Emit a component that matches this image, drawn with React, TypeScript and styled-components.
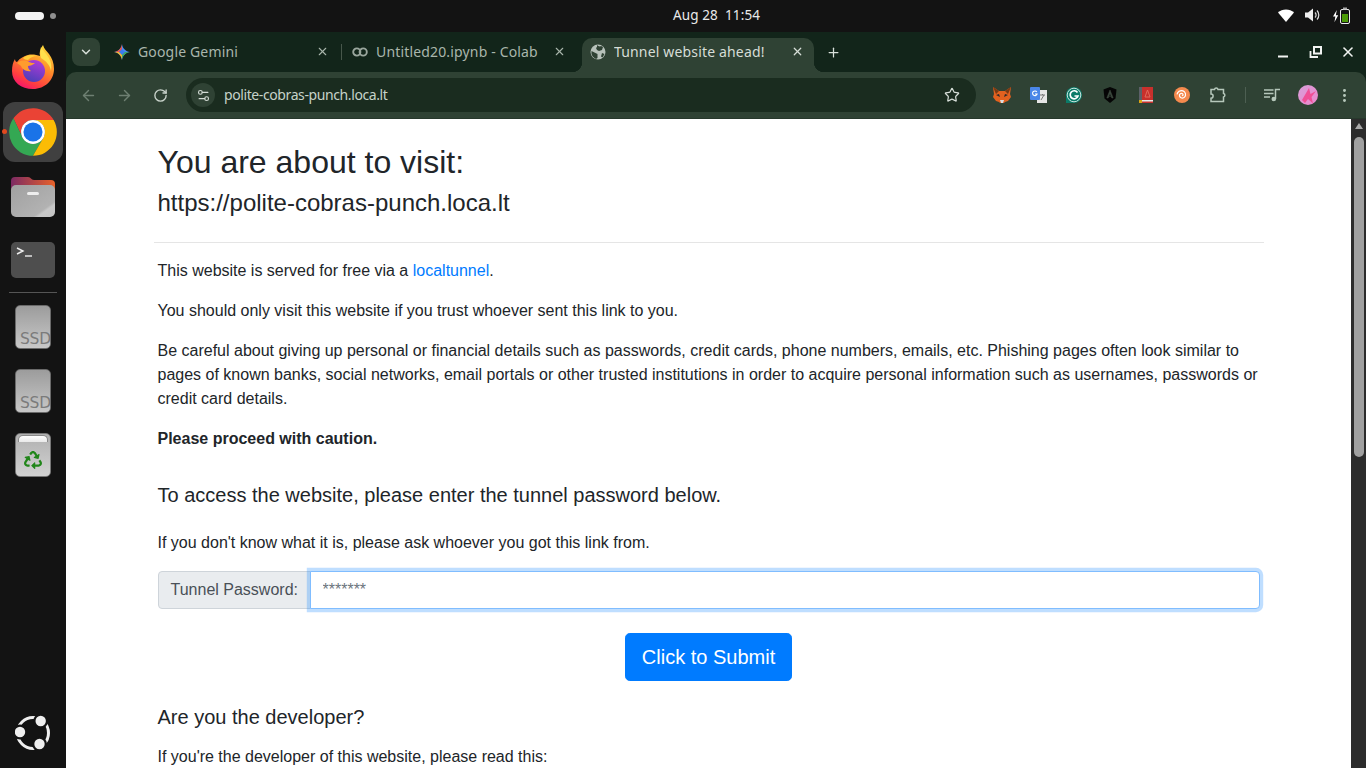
import React from "react";
import styled, { createGlobalStyle } from "styled-components";
import { ArrowLeft, ArrowRight, RotateCw, Settings2, Star, X, Plus, ChevronDown, EllipsisVertical } from "lucide-react";
import { FaRecycle } from "react-icons/fa";

const Global = createGlobalStyle`
  html, body { margin: 0; padding: 0; height: 100%; overflow: hidden; background: #131313; }
  * { box-sizing: border-box; }
`;
const Shell = styled.div`
  width: 1366px; height: 768px; overflow: hidden; display: flex; flex-direction: column;
  background: #131313; font-family: "Noto Sans", sans-serif;
`;
const TopBar = styled.header`
  height: 32px; flex: none; display: grid; grid-template-columns: 200px 1fr 133px; align-items: center;
  color: #f2f2f2; background: #131313;
`;
const Workspaces = styled.div`display: flex; align-items: center; gap: 6px; padding-left: 15px;`;
const Pill = styled.span`width: 29px; height: 8px; border-radius: 4px; background: #f4f4f4;`;
const Dot = styled.span`width: 6px; height: 6px; border-radius: 50%; background: #8f8f8f;`;
const Clock = styled.div`text-align: center; font-size: 13.5px; white-space: pre; letter-spacing: .1px; color: #e9e9e9; padding-bottom: 2px;`;
const Status = styled.div`display: flex; justify-content: flex-end; align-items: center; gap: 11px; padding: 0 16px 2px 0;`;
const Main = styled.div`flex: 1; display: flex; min-height: 0;`;
const Dock = styled.nav`width: 66px; flex: none; display: flex; flex-direction: column; align-items: center; background: #131313; position: relative;`;
const DockSlot = styled.div<{ $top: number; $h: number; $w?: number }>`
  margin-top: ${p => p.$top}px; height: ${p => p.$h}px; width: ${p => p.$w ?? 44}px; flex: none; display: flex; align-items: center; justify-content: center; position: relative;
`;
const ActiveTile = styled(DockSlot)`background: #404040; border-radius: 12px;`;
const RunDot = styled.span`position: absolute; left: -1px; top: 27px; width: 5px; height: 5px; border-radius: 50%; background: #e0491f;`;
const DockRule = styled.hr`width: 48px; height: 1px; border: 0; background: #555; margin: 14px 0 0;`;
const DriveTile = styled.div`
  width: 36px; height: 44px; border-radius: 5px; border: 1px solid #6a6a6a; background: linear-gradient(#9c9c9c, #c8c8c8);
  overflow: hidden; display: flex; align-items: flex-end; justify-content: flex-end;
`;
const DriveLabel = styled.span`font: 15.5px/20px "DejaVu Sans", sans-serif; color: #7b7b7b; margin: 0 -1px -1px 0; letter-spacing: -.2px;`;
const TrashTile = styled.div`
  width: 36px; height: 44px; border-radius: 5px; border: 1px solid #777; background: linear-gradient(#b0b0b0, #d2d2d2);
  display: flex; flex-direction: column; align-items: center; color: #21861a; gap: 9px; overflow: hidden;
`;
const TrashLid = styled.span`width: 30px; height: 7px; background: linear-gradient(#fff, #e8e8e8); border: 1px solid #8a8a8a; border-bottom: 0; border-radius: 5px 5px 0 0; margin-top: 1px;`;
const DockBottom = styled.div`margin-top: auto; margin-bottom: 17px; height: 36px; width: 36px; display: flex;`;

const Browser = styled.div`flex: 1; min-width: 0; display: flex; flex-direction: column; background: #12251a;`;
const TabStrip = styled.div`height: 40px; flex: none; display: flex; align-items: flex-end; padding-left: 6px; position: relative;`;
const TabMenu = styled.button`
  width: 28px; height: 28px; margin: 0 6px 6px 0; border: 0; border-radius: 8px; background: #2f4234; color: #d8e0da; display: flex; align-items: center; justify-content: center; padding: 0;
`;
const Tab = styled.div<{ $w: number; $pl: number; $pr: number; $active?: boolean }>`
  width: ${p => p.$w}px; height: 34px; flex: none; display: flex; align-items: center; padding: 0 ${p => p.$pr}px 7px ${p => p.$pl}px; gap: 8px; position: relative;
  font-size: 14px; color: ${p => (p.$active ? "#d6ddd7" : "#a9b6ac")};
  background: ${p => (p.$active ? "#2f4234" : "transparent")};
  border-radius: ${p => (p.$active ? "10px 10px 0 0" : "0")};
  ${p => p.$active && `
    &::before, &::after { content: ""; position: absolute; bottom: 0; width: 10px; height: 10px; }
    &::before { left: -10px; background: radial-gradient(circle at 0 0, transparent 10px, #2f4234 10.5px); }
    &::after { right: -10px; background: radial-gradient(circle at 100% 0, transparent 10px, #2f4234 10.5px); }
  `}
`;
const TabTitle = styled.span`flex: 1; white-space: nowrap; overflow: hidden; letter-spacing: .16px;`;
const TabDivider = styled.span`width: 1px; height: 16px; background: #47574b; margin-bottom: 12px; flex: none;`;
const NewTab = styled.button`margin: 0 0 6px 10px; width: 18px; height: 28px; background: none; border: 0; padding: 0; color: #d8e0da; display: flex; align-items: center; justify-content: center;`;
const WindowControls = styled.div`margin-left: auto; margin-bottom: 6px; height: 28px; display: flex; align-items: center; gap: 16px; padding-right: 10px; color: #f1f3f1;`;
const Toolbar = styled.div`
  height: 47px; flex: none; display: flex; align-items: center; background: #2f4234; border-radius: 10px 10px 0 0; border-bottom: 1px solid #27382c; padding: 0 0 0 13px;
`;
const NavIcon = styled.span<{ $dim?: boolean }>`width: 18px; flex: none; margin-right: 18px; display: flex; justify-content: center; color: ${p => (p.$dim ? "#6e7f72" : "#c8d2ca")};`;
const Omnibox = styled.div`
  width: 790px; flex: none; height: 34px; margin-left: -1px; background: #1a2c1f; border-radius: 17px; display: flex; align-items: center; padding: 0 16px 0 5px; color: #c8d3ca; font-size: 14px;
`;
const TuneChip = styled.span`width: 24px; height: 24px; border-radius: 50%; background: #2f4234; display: flex; align-items: center; justify-content: center; color: #d4dcd6; margin-right: 9px;`;
const Url = styled.span`flex: 1; color: #c6d3c9; letter-spacing: -.4px; padding-bottom: 1px;`;
const ExtRow = styled.div`display: flex; flex: none; align-items: center; margin-left: 8px;`;
const ExtSlot = styled.span`width: 36px; height: 28px; display: flex; align-items: center; justify-content: center; color: #b6c4ba;`;
const ExtSep = styled.span`width: 1px; height: 16px; background: #4d5f52; margin: 0 8px 0 9px;`;

const PageRow = styled.div`flex: 1; display: flex; min-height: 0;`;
const Page = styled.main`
  flex: 1; background: #fff; overflow: hidden; color: #212529; font: 16px/24px "Liberation Sans", Arial, sans-serif;
`;
const Container = styled.div`width: 1140px; margin: 0 auto; padding: 24px 15px 0;`;
const Head = styled.div`padding: 0 4px;`;
const H1 = styled.h1`font-size: 32px; font-weight: 400; line-height: 38.4px; margin: 0 0 8px;`;
const H2 = styled.h2`font-size: 24px; font-weight: 400; line-height: 28.8px; margin: 0 0 8px;`;
const Rule = styled.hr`border: 0; border-top: 1px solid rgba(0,0,0,.1); margin: 24px 0 16px;`;
const Body = styled.section`padding: 0 4px;`;
const P = styled.p`margin: 0 0 16px;`;
const Link = styled.a`color: #007bff; text-decoration: none;`;
const Sub = styled.h4<{ $top: number; $bottom: number }>`font-size: 20px; font-weight: 400; line-height: 24px; margin: ${p => p.$top}px 0 ${p => p.$bottom}px;`;
const InputGroup = styled.div`display: flex; height: 38px; margin-top: 16px;`;
const Prepend = styled.label`
  flex: none; width: 153px; padding: 6px 12px; background: #e9ecef; border: 1px solid #ced4da; border-radius: 4px 0 0 4px; color: #495057; margin-right: -1px; white-space: nowrap;
`;
const Password = styled.input`
  flex: 1; min-width: 0; padding: 6px 12px; border: 1px solid #80bdff; border-radius: 0 4px 4px 0; box-shadow: 0 0 0 3.2px rgba(0,123,255,.25); outline: 0; font: 16px/24px "Liberation Sans", Arial, sans-serif; color: #495057; position: relative;
  &::placeholder { color: #6c757d; opacity: 1; }
`;
const Center = styled.div`display: flex; justify-content: center; margin-top: 24px;`;
const Submit = styled.button`
  height: 48px; padding: 8px 16px; background: #007bff; color: #fff; border: 1px solid #007bff; border-radius: 4.8px; font: 20px/30px "Liberation Sans", Arial, sans-serif;
`;
const ScrollTrack = styled.div`width: 15px; flex: none; background: #2c2c2c; display: flex; flex-direction: column; align-items: center; padding-top: 3px;`;
const ScrollUp = styled.span`width: 0; height: 0; border-left: 4.5px solid transparent; border-right: 4.5px solid transparent; border-bottom: 6px solid #a8a8a8; margin: 1px 0 8px;`;
const ScrollThumb = styled.span`width: 10px; height: 320px; border-radius: 5px; background: #a0a0a0;`;

const FirefoxIcon = () => (
  <svg width="44" height="46" viewBox="0 0 44 46">
    <defs>
      <linearGradient id="ffo" x1=".8" y1="0" x2=".3" y2="1"><stop offset="0" stopColor="#ffdf3c"/><stop offset=".45" stopColor="#ff8a2a"/><stop offset=".8" stopColor="#ff3f3f"/><stop offset="1" stopColor="#f5156c"/></linearGradient>
      <linearGradient id="ffp" x1=".7" y1="0" x2=".3" y2="1"><stop offset="0" stopColor="#b13ad8"/><stop offset="1" stopColor="#4a3fb8"/></linearGradient>
    </defs>
    <path d="M1 27c0-5 1-9 3-12 0 2 1 3 2 3 3-4 7-6 11-7 4-1 9 0 12 1-1-3 0-7 3-11 1 4 4 6 6 9 3 4 5 9 5 15 0 11-9 20-21 20S1 38 1 27z" fill="url(#ffo)"/>
    <path d="M30 3c2 4 6 7 8 11 2 4 3 8 2 13-1-6-5-10-10-13-1-3-1-7 0-11z" fill="#ffe14d"/>
    <circle cx="23" cy="27" r="11" fill="url(#ffp)"/>
    <path d="M6 19c4-3 8-3 12-1 2 1 4 1 6 1-2 2-5 3-7 3 0 2 1 4 3 5-5 1-9-2-10-5-1-1-3-2-4-3z" fill="#ff9c2e"/>
    <path d="M12 14c3-3 9-4 14-2-4 0-7 2-9 4-2 0-4-1-5-2z" fill="#ffcf3a"/>
  </svg>
);
const ChromeIcon = () => (
  <svg width="52" height="52" viewBox="0 0 48 48">
    <path fill="#EA4335" d="M43.05 13A22 22 0 0 0 5.95 11.4L14.47 29.5A11 11 0 0 1 24 13Z"/>
    <path fill="#34A853" d="M5.95 11.4A22 22 0 0 0 24 46L33.5 29.5A11 11 0 0 1 14.47 29.5Z"/>
    <path fill="#FBBC05" d="M43.05 13A22 22 0 0 1 24 46L33.5 29.5A11 11 0 0 0 24 13Z"/>
    <circle cx="24" cy="24" r="11" fill="#fff"/><circle cx="24" cy="24" r="8.8" fill="#1a73e8"/>
  </svg>
);
const FilesIcon = () => (
  <svg width="44" height="41" viewBox="0 0 44 41">
    <defs>
      <linearGradient id="fl" x1="0" x2="1"><stop offset="0" stopColor="#7c2a63"/><stop offset="1" stopColor="#e8622a"/></linearGradient>
      <linearGradient id="fb" x1="0" y1="0" x2="1" y2="1"><stop offset="0" stopColor="#a0a0a0"/><stop offset=".75" stopColor="#b2b2b2"/><stop offset=".8" stopColor="#c8c8c8"/><stop offset="1" stopColor="#c4c4c4"/></linearGradient>
    </defs>
    <path d="M0 5a4 4 0 0 1 4-4h13c3 0 3 3 6 3h17a4 4 0 0 1 4 4v10H0z" fill="url(#fl)"/>
    <rect y="9" width="44" height="32" rx="5" fill="url(#fb)"/>
    <rect x="16" y="16" width="12" height="3" rx="1.5" fill="#eee"/>
  </svg>
);
const TerminalIcon = () => (
  <svg width="44" height="36" viewBox="0 0 44 36">
    <rect width="44" height="36" rx="5" fill="#4e4e4e"/>
    <path d="M6 6l6 3-6 3" stroke="#eee" strokeWidth="1.4" fill="none"/><path d="M14 14h7" stroke="#eee" strokeWidth="1.4"/>
  </svg>
);
const UbuntuIcon = () => (
  <svg width="36" height="36" viewBox="0 0 36 36">
    <circle cx="18" cy="18" r="15.5" fill="none" stroke="#efefef" strokeWidth="3"/>
    <circle cx="25.7" cy="6" r="7.5" fill="#131313"/><circle cx="24.5" cy="29" r="7.5" fill="#131313"/><circle cx="5" cy="17" r="7.5" fill="#131313"/>
    <circle cx="25.7" cy="6" r="5.2" fill="#efefef"/><circle cx="24.5" cy="29" r="5.2" fill="#efefef"/><circle cx="5" cy="17" r="5.2" fill="#efefef"/>
  </svg>
);
const Wifi = () => (<svg width="16" height="13" viewBox="0 0 16 13"><path d="M0 3.6C2 1.5 5 .4 8 .4s6 1.1 8 3.2L8 13z" fill="#fff"/></svg>);
const Volume = () => (
  <svg width="17" height="14" viewBox="0 0 17 14"><path d="M0 4.5h3L8 .5v13l-5-4H0z" fill="#eee"/><path d="M10 4.5a3.4 3.4 0 0 1 0 5M12 2.5a6.5 6.5 0 0 1 0 9" stroke="#ddd" strokeWidth="1.2" fill="none"/></svg>
);
const Battery = () => (
  <svg width="17" height="17" viewBox="0 0 17 17">
    <path d="M4 2L0 9h2.5L1.5 15 5.5 7.5H3z" fill="#fff" transform="translate(0 1) scale(.95)"/>
    <rect x="7.5" y="2.5" width="9" height="14" rx="1.5" fill="none" stroke="#eee"/><rect x="10" y=".5" width="4" height="2" fill="#aaa"/>
    <rect x="9" y="7" width="6" height="8" fill="#4b9a06"/>
  </svg>
);
const Gemini = () => (
  <svg width="16" height="16" viewBox="0 0 16 16">
    <path d="M8 0c.4 4 3.6 7.6 8 8-4 .4-7.6 3.6-8 8-.4-4-3.6-7.6-8-8 4-.4 7.6-3.6 8-8z" fill="#4c8df6"/>
    <path d="M0 8c4-.4 7.6-3.6 8-8v8z" fill="#e8554a"/><path d="M0 8c4 .4 7.6 3.6 8 8V8z" fill="#f3b52e"/><path d="M8 16c.4-4 3.6-7.6 8-8H8z" fill="#3fa85c"/>
    <path d="M5 8l3-3 3 3-3 3z" fill="#3a7bf0"/>
  </svg>
);
const Colab = () => (
  <svg width="16" height="16" viewBox="0 0 16 16"><circle cx="4.8" cy="8" r="3.6" fill="none" stroke="#9aa69d" strokeWidth="1.9"/><circle cx="11.2" cy="8" r="3.6" fill="none" stroke="#9aa69d" strokeWidth="1.9"/></svg>
);
const Globe = () => (
  <svg width="16" height="16" viewBox="0 0 16 16"><circle cx="8" cy="8" r="7.5" fill="#b7c1ba"/><path d="M7 1c1 1 3 2 4 1l2 1-1 3-3 1-2-1-1-2 1-1zM1.5 7l4 2 2 1v4L6 15c-2-1-4-3-4.5-5zM12 9l2.5 1-2 3.5-1.5-1z" fill="#2f4234"/></svg>
);
const RestoreIcon = () => (
  <svg width="16" height="16" viewBox="0 0 16 16"><path d="M6 3h7v6.5H6z" fill="none" stroke="#f1f3f1" strokeWidth="2"/><path d="M2.500 7v6H10" stroke="#f1f3f1" strokeWidth="1.800" fill="none"/></svg>
);
const MinIcon = () => (<svg width="16" height="16" viewBox="0 0 16 16"><rect x="2" y="11.500" width="10" height="2" fill="#f1f3f1"/></svg>);
const Fox = () => (
  <svg width="18" height="16" viewBox="0 0 18 16">
    <path d="M0 0l6 4h6l6-4-1 7 1 3-3 4-3 1-1 1H7l-1-1-3-1-3-4 1-3z" fill="#e2611f"/>
    <path d="M0 0l6 4-3 3zM18 0l-6 4 3 3z" fill="#7a3a14"/><path d="M3 8l3-1 1 3zM15 8l-3-1-1 3z" fill="#2b2b2b"/><path d="M7 13h4l-1 3H8z" fill="#ddd"/>
  </svg>
);
const Translate = () => (
  <svg width="17" height="16" viewBox="0 0 17 16"><rect x="7" y="3" width="10" height="13" fill="#e6e6e6"/><path d="M10 8h5M12.500 7v1M11 13l3-5" stroke="#777" strokeWidth="1"/><rect width="10" height="13" rx="1" fill="#4a86e8"/><path d="M6.800 5a2.300 2.300 0 1 0 .3 2H5" fill="none" stroke="#fff" strokeWidth="1.100"/></svg>
);
const Grammarly = () => (
  <svg width="16" height="16" viewBox="0 0 16 16"><path d="M8 0a8 8 0 0 1 0 16H0V8a8 8 0 0 1 8-8z" fill="#0b7a68"/><circle cx="8" cy="8" r="6.800" fill="none" stroke="#dff0ec" strokeWidth=".9"/><path d="M11.500 5.500A4 4 0 1 0 12 9H8.500" fill="none" stroke="#fff" strokeWidth="1.700"/></svg>
);
const Angular = () => (
  <svg width="14" height="16" viewBox="0 0 14 16"><path d="M7 0L13.500 2.500 12.500 11.500 7 16 1.500 11.500.5 2.500z" fill="#050505"/><path d="M7 3L3.800 11h1.400L7 6.500 8.800 11h1.400zM5.800 9.500h2.400" fill="#3c4a3f" stroke="#3c4a3f" strokeWidth=".5"/></svg>
);
const Book = () => (
  <svg width="14" height="16" viewBox="0 0 14 16"><rect width="14" height="16" fill="#c8302c"/><rect width="3" height="16" fill="#5c6068"/><rect x="3" y="13" width="11" height="1.500" fill="#e9e9e9"/><path d="M8.500 3L6 10h5z" fill="none" stroke="#e16a5a"/><rect y="13" width="3" height="3" fill="#d9a514"/></svg>
);
const Swirl = () => (
  <svg width="16" height="16" viewBox="0 0 16 16"><circle cx="8" cy="8" r="8" fill="#f58a4e"/><path d="M8 8.500c1 .5 1.500-1 .5-1.800-1.500-1-3.500.3-3 2.300.5 2.200 3.500 2.800 5 1.200 2-2 1-5.500-1.500-6.300-2.800-.9-5.500.8-6 3.500" fill="none" stroke="#fff" strokeWidth="1.200"/></svg>
);
const Puzzle = () => (
  <svg width="18" height="18" viewBox="0 0 18 18"><path d="M2 3.500h3.500a1.800 1.800 0 0 1 3.500 0h5.500v4a1.800 1.800 0 0 1 0 3.500v4.500H2v-3.300a2 2 0 0 0 0-4.200z" fill="none" stroke="#b6c8bb" strokeWidth="1.500"/></svg>
);
const MediaIcon = () => (
  <svg width="16" height="14" viewBox="0 0 16 14"><path d="M0 2h9.500M0 5.500h9.500M0 9h6" stroke="#b6c8bb" strokeWidth="1.500"/><path d="M11.500 11V1.500H16" stroke="#b6c8bb" strokeWidth="1.500" fill="none"/><circle cx="9.800" cy="11" r="2.300" fill="#b6c8bb"/></svg>
);
const Avatar = () => (
  <svg width="20" height="20" viewBox="0 0 20 20">
    <defs><linearGradient id="av" x1="0" y1="0" x2="1" y2="1"><stop offset="0" stopColor="#d79fd8"/><stop offset="1" stopColor="#ee85cc"/></linearGradient></defs>
    <circle cx="10" cy="10" r="10" fill="url(#av)"/><path d="M4 15L11 3l1.500 6L18 6l-4.500 6 1.500 6.500-5-4.500-3 4z" fill="#f04f96"/>
  </svg>
);

export default function App() {
  return (
    <Shell>
      <Global />
      <TopBar>
        <Workspaces><Pill /><Dot /></Workspaces>
        <Clock>{"Aug 28  11:54"}</Clock>
        <Status><Wifi /><Volume /><Battery /></Status>
      </TopBar>
      <Main>
        <Dock>
          <DockSlot $top={12} $h={46}><FirefoxIcon /></DockSlot>
          <ActiveTile $top={12} $h={60} $w={60}><RunDot /><ChromeIcon /></ActiveTile>
          <DockSlot $top={14} $h={41}><FilesIcon /></DockSlot>
          <DockSlot $top={25} $h={36}><TerminalIcon /></DockSlot>
          <DockRule />
          <DockSlot $top={12} $h={44}><DriveTile><DriveLabel>SSD</DriveLabel></DriveTile></DockSlot>
          <DockSlot $top={20} $h={44}><DriveTile><DriveLabel>SSD</DriveLabel></DriveTile></DockSlot>
          <DockSlot $top={20} $h={44}><TrashTile><TrashLid /><FaRecycle size={18} /></TrashTile></DockSlot>
          <DockBottom><UbuntuIcon /></DockBottom>
        </Dock>
        <Browser>
          <TabStrip>
            <TabMenu><ChevronDown size={14} strokeWidth={2.5} /></TabMenu>
            <Tab $w={235} $pl={8} $pr={12}><Gemini /><TabTitle>Google Gemini</TabTitle><X size={13} strokeWidth={2} /></Tab>
            <TabDivider />
            <Tab $w={240} $pl={10} $pr={16}><Colab /><TabTitle>Untitled20.ipynb - Colab</TabTitle><X size={13} strokeWidth={2} /></Tab>
            <Tab $w={232} $pl={8} $pr={10} $active><Globe /><TabTitle>Tunnel website ahead!</TabTitle><X size={13} strokeWidth={2.2} /></Tab>
            <NewTab><Plus size={15} strokeWidth={2} /></NewTab>
            <WindowControls>
              <MinIcon /><RestoreIcon /><X size={16} strokeWidth={2.4} />
            </WindowControls>
          </TabStrip>
          <Toolbar>
            <NavIcon $dim><ArrowLeft size={17} /></NavIcon>
            <NavIcon $dim><ArrowRight size={17} /></NavIcon>
            <NavIcon><RotateCw size={15} strokeWidth={2.2} /></NavIcon>
            <Omnibox>
              <TuneChip><Settings2 size={15} strokeWidth={1.8} /></TuneChip>
              <Url>polite-cobras-punch.loca.lt</Url>
              <Star size={16} strokeWidth={1.8} color="#d6ded8" />
            </Omnibox>
            <ExtRow>
              <ExtSlot><Fox /></ExtSlot>
              <ExtSlot><Translate /></ExtSlot>
              <ExtSlot><Grammarly /></ExtSlot>
              <ExtSlot><Angular /></ExtSlot>
              <ExtSlot><Book /></ExtSlot>
              <ExtSlot><Swirl /></ExtSlot>
              <ExtSlot><Puzzle /></ExtSlot>
              <ExtSep />
              <ExtSlot><MediaIcon /></ExtSlot>
              <ExtSlot><Avatar /></ExtSlot>
              <ExtSlot><EllipsisVertical size={17} strokeWidth={2.2} color="#b6c8bb" /></ExtSlot>
            </ExtRow>
          </Toolbar>
          <PageRow>
            <Page>
              <Container>
                <Head>
                  <H1>You are about to visit:</H1>
                  <H2>https://polite-cobras-punch.loca.lt</H2>
                </Head>
                <Rule />
                <Body>
                  <P>This website is served for free via a <Link href="#">localtunnel</Link>.</P>
                  <P>You should only visit this website if you trust whoever sent this link to you.</P>
                  <P>Be careful about giving up personal or financial details such as passwords, credit cards, phone numbers, emails, etc. Phishing pages often look similar to pages of known banks, social networks, email portals or other trusted institutions in order to acquire personal information such as usernames, passwords or credit card details.</P>
                  <P><strong>Please proceed with caution.</strong></P>
                  <Sub $top={32} $bottom={24}>To access the website, please enter the tunnel password below.</Sub>
                  <P>If you don't know what it is, please ask whoever you got this link from.</P>
                  <InputGroup>
                    <Prepend>Tunnel Password:</Prepend>
                    <Password placeholder="*******" readOnly />
                  </InputGroup>
                  <Center><Submit>Click to Submit</Submit></Center>
                  <Sub $top={24} $bottom={16}>Are you the developer?</Sub>
                  <P>If you're the developer of this website, please read this:</P>
                </Body>
              </Container>
            </Page>
            <ScrollTrack><ScrollUp /><ScrollThumb /></ScrollTrack>
          </PageRow>
        </Browser>
      </Main>
    </Shell>
  );
}
